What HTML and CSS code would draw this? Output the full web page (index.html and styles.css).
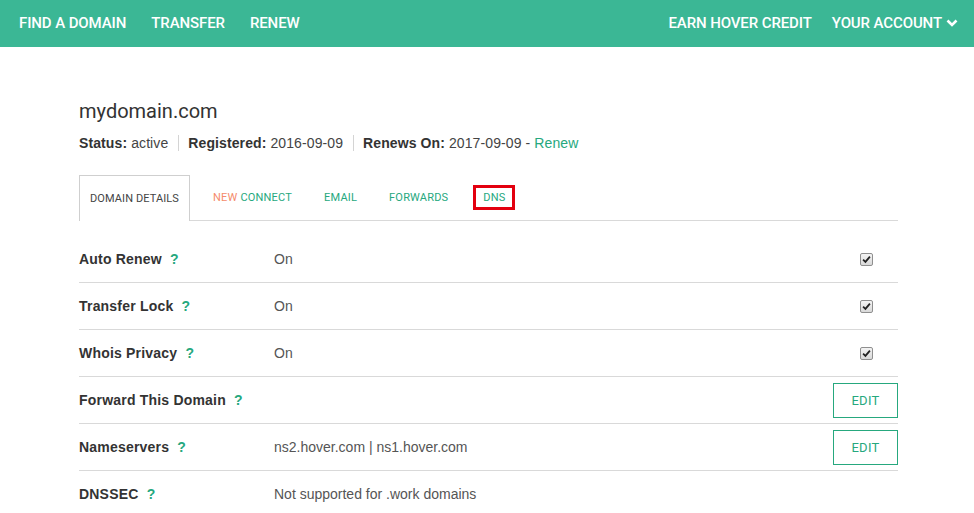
FILE: index.html
```html
<!DOCTYPE html>
<html>
<head>
<meta charset="utf-8">
<link rel="stylesheet" href="styles.css">
</head>
<body>
<nav class="topnav">
  <div class="nav-left">
    <a class="nav-link">FIND A DOMAIN</a>
    <a class="nav-link">TRANSFER</a>
    <a class="nav-link">RENEW</a>
  </div>
  <div class="nav-right">
    <a class="nav-link">EARN HOVER CREDIT</a>
    <a class="nav-link">YOUR ACCOUNT <svg class="chev" viewBox="0 0 12 10" width="12" height="10"><path d="M1.5 2.5 L6 7 L10.5 2.5" fill="none" stroke="#fff" stroke-width="2.6"/></svg></a>
  </div>
</nav>

<main class="page">
  <h1 class="domain">mydomain.com</h1>
  <div class="status">
    <span class="stat"><b>Status:</b> active</span>
    <span class="sep"></span>
    <span class="stat"><b>Registered:</b> 2016-09-09</span>
    <span class="sep"></span>
    <span class="stat"><b>Renews On:</b> 2017-09-09 - <a class="green">Renew</a></span>
  </div>

  <ul class="tabs">
    <li class="tab active">DOMAIN DETAILS</li>
    <li class="tab first-link"><span><span class="orange">NEW</span> CONNECT</span></li>
    <li class="tab">EMAIL</li>
    <li class="tab">FORWARDS</li>
    <li class="tab"><span class="marked">DNS</span></li>
  </ul>

  <div class="rows">
    <div class="row">
      <div class="label">Auto Renew <span class="q">?</span></div>
      <div class="value">On</div>
      <div class="action"><span class="check"><svg viewBox="0 0 10 10" width="9" height="9"><path d="M1.2 5.2 L3.8 7.6 L8.8 1.8" fill="none" stroke="#222" stroke-width="2"/></svg></span></div>
    </div>
    <div class="row">
      <div class="label">Transfer Lock <span class="q">?</span></div>
      <div class="value">On</div>
      <div class="action"><span class="check"><svg viewBox="0 0 10 10" width="9" height="9"><path d="M1.2 5.2 L3.8 7.6 L8.8 1.8" fill="none" stroke="#222" stroke-width="2"/></svg></span></div>
    </div>
    <div class="row">
      <div class="label">Whois Privacy <span class="q">?</span></div>
      <div class="value">On</div>
      <div class="action"><span class="check"><svg viewBox="0 0 10 10" width="9" height="9"><path d="M1.2 5.2 L3.8 7.6 L8.8 1.8" fill="none" stroke="#222" stroke-width="2"/></svg></span></div>
    </div>
    <div class="row">
      <div class="label">Forward This Domain <span class="q">?</span></div>
      <div class="value"></div>
      <div class="action"><a class="btn">EDIT</a></div>
    </div>
    <div class="row">
      <div class="label">Nameservers <span class="q">?</span></div>
      <div class="value">ns2.hover.com | ns1.hover.com</div>
      <div class="action"><a class="btn">EDIT</a></div>
    </div>
    <div class="row">
      <div class="label">DNSSEC <span class="q">?</span></div>
      <div class="value">Not supported for .work domains</div>
      <div class="action"></div>
    </div>
  </div>
</main>
</body>
</html>
```

FILE: styles.css
```css
html, body {
  margin: 0;
  padding: 0;
  background: #fff;
}
body {
  font-family: "Liberation Sans", Arial, sans-serif;
  color: #333;
  overflow: hidden;
}
a { text-decoration: none; cursor: pointer; }

.topnav {
  height: 47px;
  background: #3bb795;
  display: flex;
  justify-content: space-between;
  align-items: center;
  padding: 0 16px 0 19px;
  box-sizing: border-box;
}
.nav-left, .nav-right {
  display: flex;
  align-items: center;
  gap: 25px;
}
.nav-right { gap: 20px; }
.nav-link {
  color: #fff;
  font-family: Roboto, "Noto Sans", sans-serif;
  font-weight: 500;
  font-size: 15px;
  letter-spacing: -0.1px;
  display: flex;
  align-items: center;
  gap: 4px;
  margin-top: -2px;
}
.chev { display: block; margin-top: 1px; }

.page {
  width: 819px;
  margin-left: 79px;
  padding-top: 51px;
}

.domain {
  margin: 0;
  font-family: Roboto, "Noto Sans", sans-serif;
  font-weight: 400;
  font-size: 20px;
  line-height: 26px;
  color: #333;
}
.status {
  display: flex;
  align-items: center;
  margin-top: 11px;
  font-size: 14px;
  line-height: 16px;
  color: #444;
  letter-spacing: 0.1px;
}
.status b { color: #333; }
.sep {
  width: 1px;
  height: 16px;
  background: #d4d4d4;
  margin: 0 9px 0 10px;
}
.green { color: #26a87e; }
.orange { color: #f58b6c; }

.tabs {
  list-style: none;
  margin: 24px 0 0 0;
  padding: 0;
  display: flex;
  align-items: stretch;
  height: 45px;
  border-bottom: 1px solid #d9d9d9;
  font-family: Roboto, "Noto Sans", sans-serif;
  font-size: 11px;
  letter-spacing: 0.2px;
}
.tab {
  display: flex;
  align-items: center;
  padding: 0 16px;
  color: #26a87e;
  font-weight: 400;
}
.tab.active {
  color: #444;
  padding: 0 10px;
  border: 1px solid #cfcfcf;
  border-bottom: none;
  background: #fff;
  margin-bottom: -1px;
  height: 46px;
  box-sizing: border-box;
  letter-spacing: 0.1px;
}
.tab.first-link { margin-left: 7px; }
.marked {
  border: 3px solid #e3000f;
  padding: 3px 6px 3px 7px;
  line-height: 13px;
  margin-left: -7px;
}

.rows { margin-top: 15px; }
.row {
  display: grid;
  grid-template-columns: 195px 1fr auto;
  align-items: center;
  height: 47px;
  box-sizing: border-box;
  border-bottom: 1px solid #d9d9d9;
  font-size: 14px;
}
.label {
  font-weight: bold;
  color: #333;
  letter-spacing: 0.2px;
}
.q {
  color: #26a87e;
  margin-left: 4px;
}
.value { color: #555; }
.action {
  display: flex;
  justify-content: flex-end;
}
.check {
  width: 11px;
  height: 11px;
  border: 1px solid #8f8f8f;
  border-radius: 2px;
  background: linear-gradient(#f4f4f4, #d9d9d9);
  display: flex;
  align-items: center;
  justify-content: center;
  margin-right: 25px;
}
.check svg { display: block; }
.btn {
  width: 65px;
  height: 35px;
  box-sizing: border-box;
  border: 1px solid #26a87e;
  color: #26a87e;
  font-family: Roboto, "Noto Sans", sans-serif;
  font-size: 13px;
  display: flex;
  align-items: center;
  justify-content: center;
  letter-spacing: 0.3px;
}
```
